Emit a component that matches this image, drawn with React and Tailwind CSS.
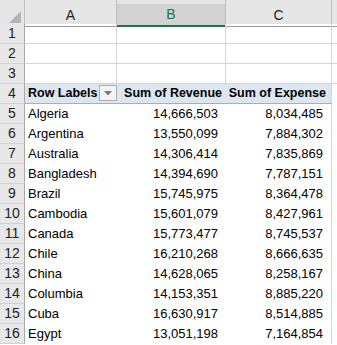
import React from 'react'

const rows = [
    ['Algeria', '14,666,503', '8,034,485'],
    ['Argentina', '13,550,099', '7,884,302'],
    ['Australia', '14,306,414', '7,835,869'],
    ['Bangladesh', '14,394,690', '7,787,151'],
    ['Brazil', '15,745,975', '8,364,478'],
    ['Cambodia', '15,601,079', '8,427,961'],
    ['Canada', '15,773,477', '8,745,537'],
    ['Chile', '16,210,268', '8,666,635'],
    ['China', '14,628,065', '8,258,167'],
    ['Columbia', '14,153,351', '8,885,220'],
    ['Cuba', '16,630,917', '8,514,885'],
    ['Egypt', '13,051,198', '7,164,854'],
]

const grid = 'grid grid-cols-[25px_92px_109px_106px_1fr]'

const RowNum = ({ n }) => (
    <div className="h-[20px] flex items-center justify-center bg-[#e8e8e8] border-b border-r border-b-[#d0d0d0] border-r-[#a8a8a8] text-[14px] font-normal text-[#222]">
        {n}
    </div>
)

const App = () => {
    return (
        <div className="w-[337px] h-[345px] overflow-hidden bg-white text-black" style={{ fontFamily: '"Liberation Sans", Arial, sans-serif' }}>
            {/* column headers */}
            <div className={`${grid} h-[24px] text-[14px] bg-[#e6e6e6]`}>
                <div className="flex items-end justify-end pr-[3px] pb-[3px] border-r border-b border-r-[#bdbdbd] border-b-[#9b9b9b]">
                    <svg width="12" height="12" viewBox="0 0 12 12" className="block shrink-0">
                        <polygon points="12,0 12,12 0,12" fill="#b4b4b4" />
                    </svg>
                </div>
                <div className="pt-[4px] border-r border-b border-r-[#bdbdbd] border-b-[#9b9b9b] flex items-center justify-center text-[#222]">A</div>
                <div className="flex flex-col border-r border-r-[#bdbdbd]">
                    <div className="h-[4px]" />
                    <div className="flex-1 bg-[#d2d2d2] border-b-2 border-b-[#217346] flex items-center justify-center text-[#217346]">B</div>
                </div>
                <div className="pt-[4px] border-r border-b border-r-[#bdbdbd] border-b-[#9b9b9b] flex items-center justify-center text-[#222]">C</div>
                <div className="border-b border-b-[#9b9b9b]" />
            </div>

            {/* empty rows */}
            {[1, 2, 3].map(n => (
                <div key={n} className={grid}>
                    <RowNum n={n} />
                    <div className="border-r border-b border-[#d4d4d4]" />
                    <div className="border-r border-b border-[#d4d4d4]" />
                    <div className="border-r border-b border-[#d4d4d4]" />
                    <div className="border-b border-[#d4d4d4]" />
                </div>
            ))}

            {/* pivot header */}
            <div className={`${grid} text-[12.5px] font-bold`}>
                <RowNum n={4} />
                <div className="relative h-[20px] bg-[#dce6f1] border-b border-b-[#95b3d7] flex items-center pl-[3px]">
                    Row Labels
                    <div className="absolute right-0 top-[1px] w-[18px] h-[16px] bg-[#f3f3f3] border border-[#ababab] flex items-center justify-center">
                        <svg width="8" height="5" viewBox="0 0 8 5"><path d="M0 0h8L4 4.5z" fill="#7a7a7a" /></svg>
                    </div>
                </div>
                <div className="h-[20px] bg-[#dce6f1] border-b border-b-[#95b3d7] flex items-center justify-end pr-[4px] whitespace-nowrap">Sum of Revenue</div>
                <div className="h-[20px] bg-[#dce6f1] border-b border-r border-b-[#95b3d7] border-r-[#d4d4d4] flex items-center justify-end pr-[5px] whitespace-nowrap">Sum of Expense</div>
                <div />
            </div>

            {/* data rows */}
            {rows.map(([name, rev, exp], i) => (
                <div key={name} className={`${grid} text-[13px]`}>
                    <RowNum n={i + 5} />
                    <div className="h-[20px] flex items-center pl-[3px]">{name}</div>
                    <div className="h-[20px] flex items-center justify-end pr-[8px]">{rev}</div>
                    <div className="h-[20px] flex items-center justify-end pr-[8px] border-r border-[#d4d4d4]">{exp}</div>
                    <div />
                </div>
            ))}
        </div>
    )
}

export default App
